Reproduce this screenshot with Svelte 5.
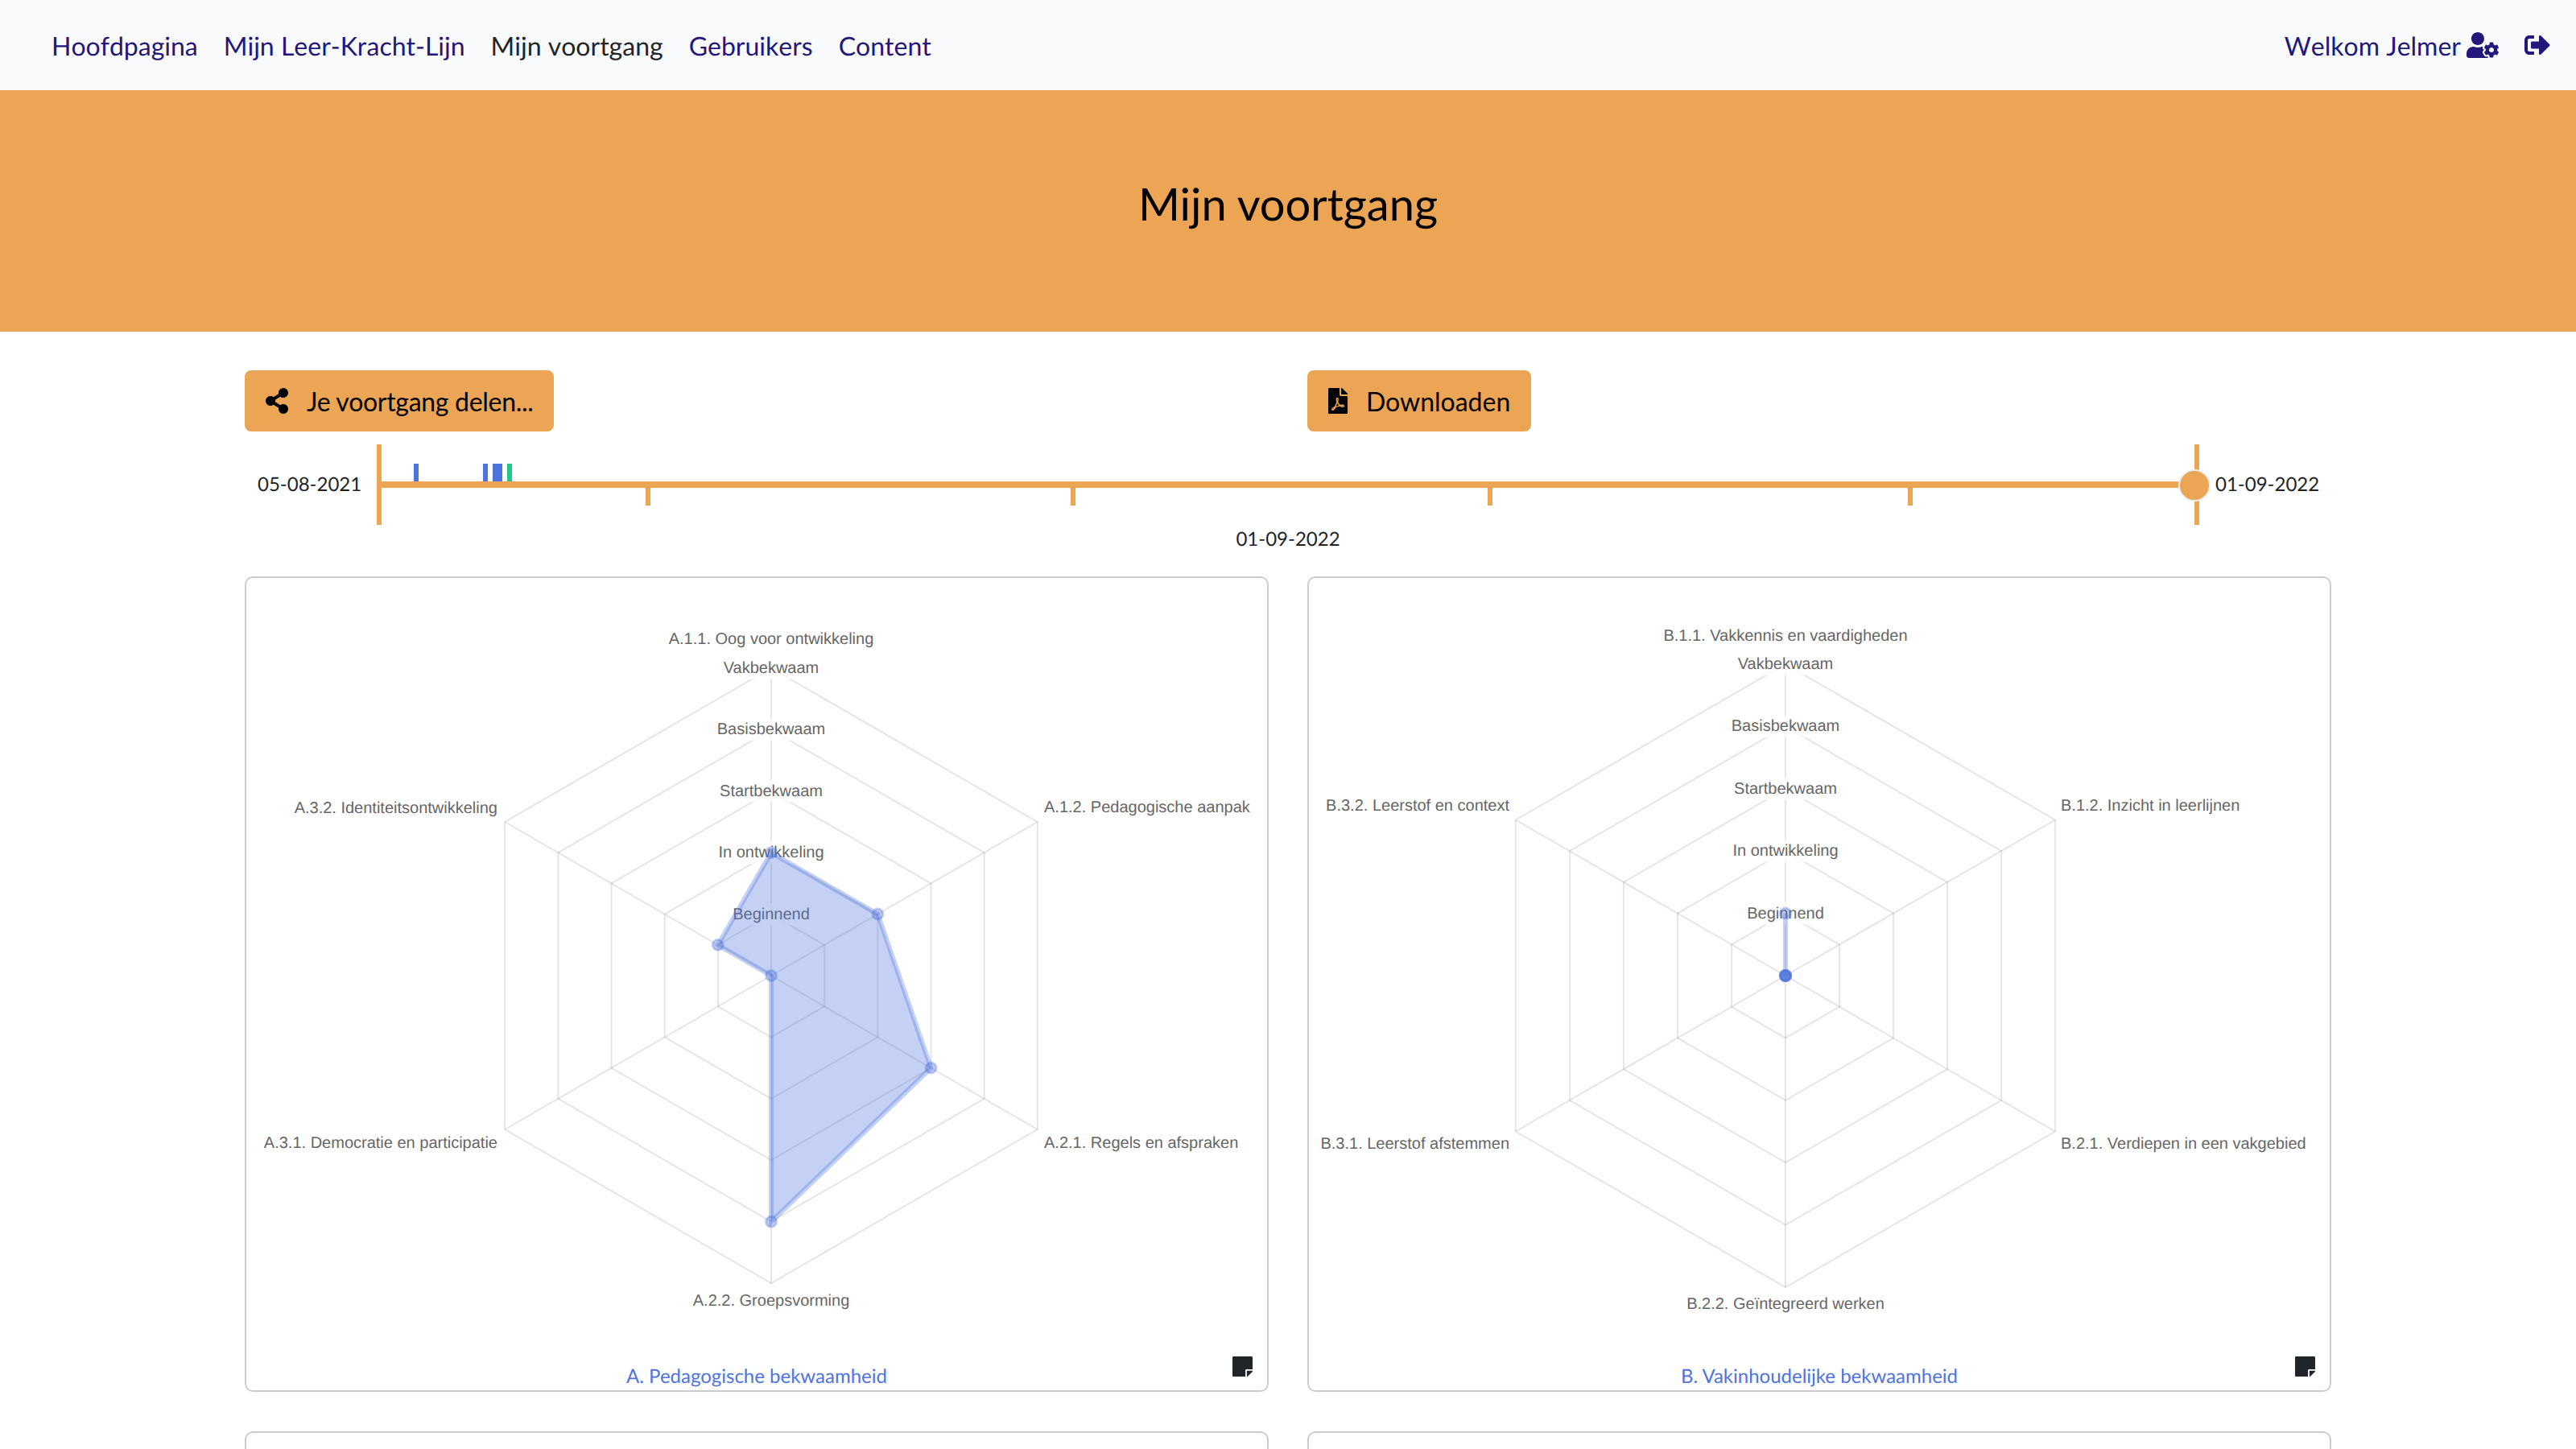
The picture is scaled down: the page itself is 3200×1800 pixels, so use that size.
<script>
  const navItems = [
    { label: 'Hoofdpagina' },
    { label: 'Mijn Leer-Kracht-Lijn' },
    { label: 'Mijn voortgang', active: true },
    { label: 'Gebruikers' },
    { label: 'Content' }
  ];

  const levels = ['Beginnend', 'In ontwikkeling', 'Startbekwaam', 'Basisbekwaam', 'Vakbekwaam'];

  // offsets in px from the left of the track
  const marks = [
    { left: 46, width: 6, color: '#4e73df' },
    { left: 132, width: 6, color: '#4e73df' },
    { left: 144, width: 12, color: '#4e73df' },
    { left: 162, width: 6, color: '#1cc88a' }
  ];
  const ticks = [334, 862, 1380, 1902];

  const charts = [
    {
      title: 'A. Pedagogische bekwaamheid',
      cx: 652, cy: 494, radius: 382,
      values: [2, 2, 3, 4, 0, 1],
      labels: [
        { text: 'A.1.1. Oog voor ontwikkeling', x: 652, y: 76, anchor: 'middle' },
        { text: 'A.1.2. Pedagogische aanpak', x: 991, y: 285, anchor: 'start' },
        { text: 'A.2.1. Regels en afspraken', x: 991, y: 702, anchor: 'start' },
        { text: 'A.2.2. Groepsvorming', x: 652, y: 898, anchor: 'middle' },
        { text: 'A.3.1. Democratie en participatie', x: 312, y: 702, anchor: 'end' },
        { text: 'A.3.2. Identiteitsontwikkeling', x: 312, y: 286, anchor: 'end' }
      ]
    },
    {
      title: 'B. Vakinhoudelijke bekwaamheid',
      cx: 592, cy: 494, radius: 387,
      values: [1, 0, 0, 0, 0, 0],
      labels: [
        { text: 'B.1.1. Vakkennis en vaardigheden', x: 592, y: 72, anchor: 'middle' },
        { text: 'B.1.2. Inzicht in leerlijnen', x: 934, y: 283, anchor: 'start' },
        { text: 'B.2.1. Verdiepen in een vakgebied', x: 934, y: 703, anchor: 'start' },
        { text: 'B.2.2. Geïntegreerd werken', x: 592, y: 902, anchor: 'middle' },
        { text: 'B.3.1. Leerstof afstemmen', x: 249, y: 703, anchor: 'end' },
        { text: 'B.3.2. Leerstof en context', x: 249, y: 283, anchor: 'end' }
      ]
    }
  ];

  function vertex(chart, i, level) {
    const r = (chart.radius / 5) * level;
    const angle = (Math.PI / 3) * i - Math.PI / 2;
    return [chart.cx + r * Math.cos(angle), chart.cy + r * Math.sin(angle)];
  }

  function ring(chart, level) {
    return [0, 1, 2, 3, 4, 5].map((i) => vertex(chart, i, level).join(',')).join(' ');
  }

  function shape(chart) {
    return chart.values.map((v, i) => vertex(chart, i, v).join(',')).join(' ');
  }
</script>

<div class="page">
  <nav class="navbar">
    <ul class="nav-links">
      {#each navItems as item}
        <li class:active={item.active}>{item.label}</li>
      {/each}
    </ul>
    <div class="nav-user">
      <span>Welkom Jelmer</span>
      <svg class="icon-user" viewBox="0 0 640 512"><path d="M610.5 373.3c2.6-14.1 2.6-28.5 0-42.6l25.8-14.9c3-1.7 4.3-5.2 3.3-8.5-6.7-21.6-18.2-41.2-33.2-57.4-2.3-2.5-6-3.1-9-1.4l-25.8 14.9c-10.9-9.3-23.4-16.5-36.9-21.3v-29.8c0-3.4-2.4-6.4-5.7-7.1-22.3-5-45-4.8-66.2 0-3.3.7-5.7 3.7-5.7 7.1v29.8c-13.5 4.8-26 12-36.9 21.3l-25.8-14.9c-2.9-1.7-6.7-1.1-9 1.4-15 16.2-26.5 35.8-33.2 57.4-1 3.3.4 6.8 3.3 8.5l25.8 14.9c-2.6 14.1-2.6 28.5 0 42.6l-25.8 14.9c-3 1.7-4.3 5.2-3.3 8.5 6.7 21.6 18.2 41.1 33.2 57.4 2.3 2.5 6 3.1 9 1.4l25.8-14.9c10.9 9.3 23.4 16.5 36.9 21.3v29.8c0 3.4 2.4 6.4 5.7 7.1 22.3 5 45 4.8 66.2 0 3.3-.7 5.7-3.7 5.7-7.1v-29.8c13.5-4.8 26-12 36.9-21.3l25.8 14.9c2.9 1.7 6.7 1.1 9-1.4 15-16.2 26.5-35.8 33.2-57.4 1-3.3-.4-6.8-3.3-8.5l-25.8-14.9zM496 400.5c-26.8 0-48.5-21.8-48.5-48.5s21.8-48.5 48.5-48.5 48.5 21.8 48.5 48.5-21.7 48.5-48.5 48.5zM224 256c70.7 0 128-57.3 128-128S294.7 0 224 0 96 57.3 96 128s57.3 128 128 128zm201.2 226.5c-2.3-1.2-4.6-2.6-6.8-3.9l-7.9 4.6c-6 3.4-12.8 5.3-19.6 5.3-10.9 0-21.4-4.6-28.9-12.6-18.3-19.8-32.3-43.9-40.2-69.6-5.5-17.7 1.9-36.4 17.9-45.7l7.9-4.6c-.1-2.6-.1-5.2 0-7.8l-7.9-4.6c-16-9.2-23.4-28-17.9-45.7.9-2.9 2.2-5.8 3.2-8.7-3.8-.3-7.5-1.2-11.4-1.2h-16.7c-22.2 10.2-46.9 16-72.9 16s-50.6-5.8-72.9-16h-16.7C60.2 288 0 348.2 0 422.4V464c0 26.5 21.5 48 48 48h352c10.1 0 19.5-3.2 27.2-8.5-1.2-3.8-2-7.7-2-11.8v-9.2z"/></svg>
      <svg class="icon-logout" viewBox="0 0 512 512"><path d="M497 273L329 441c-15 15-41 4.5-41-17v-96H152c-13.3 0-24-10.7-24-24v-96c0-13.3 10.7-24 24-24h136V88c0-21.4 25.9-32 41-17l168 168c9.3 9.4 9.3 24.6 0 34zM192 436v-40c0-6.6-5.4-12-12-12H96c-17.7 0-32-14.3-32-32V160c0-17.7 14.3-32 32-32h84c6.6 0 12-5.4 12-12V76c0-6.6-5.4-12-12-12H96c-53 0-96 43-96 96v192c0 53 43 96 96 96h84c6.6 0 12-5.4 12-12z"/></svg>
    </div>
  </nav>

  <header class="hero">
    <h1>Mijn voortgang</h1>
  </header>

  <main class="container">
    <div class="actions">
      <div>
        <button class="btn share">
          <svg class="icon-share" viewBox="0 0 448 512"><path d="M352 320c-22.608 0-43.387 7.819-59.79 20.895l-102.486-64.054a96.551 96.551 0 0 0 0-41.683l102.486-64.054C308.613 184.181 329.392 192 352 192c53.019 0 96-42.981 96-96S405.019 0 352 0s-96 42.981-96 96c0 7.158.79 14.13 2.276 20.841L155.79 180.895C139.387 167.819 118.608 160 96 160c-53.019 0-96 42.981-96 96s42.981 96 96 96c22.608 0 43.387-7.819 59.79-20.895l102.486 64.054A96.301 96.301 0 0 0 256 416c0 53.019 42.981 96 96 96s96-42.981 96-96-42.981-96-96-96z"/></svg>
          Je voortgang delen...
        </button>
      </div>
      <div>
        <button class="btn">
          <svg class="icon-pdf" viewBox="0 0 384 512"><path d="M181.9 256.1c-5-16-4.9-46.9-2-46.9 8.4 0 7.6 36.9 2 46.9zm-1.7 47.2c-7.7 20.2-17.3 43.3-28.4 62.7 18.3-7 39-17.2 62.9-21.9-12.7-9.6-24.9-23.4-34.5-40.8zM86.1 428.1c0 .8 13.2-5.4 34.9-40.2-6.7 6.3-29.1 24.5-34.9 40.2zM248 160h136v328c0 13.3-10.7 24-24 24H24c-13.3 0-24-10.7-24-24V24C0 10.7 10.7 0 24 0h200v136c0 13.2 10.8 24 24 24zm-8 171.8c-20-12.2-33.3-29-42.7-53.8 4.5-18.5 11.6-46.6 6.2-64.2-4.7-29.4-42.4-26.5-47.8-6.8-5 18.3-.4 44.1 8.1 77-11.6 27.6-28.7 64.6-40.8 85.8-.1 0-.1.1-.2.1-27.1 13.9-73.6 44.5-54.5 68 5.6 6.9 16 10 21.5 10 17.9 0 35.7-18 61.1-61.8 25.8-8.5 54.1-19.1 79-23.2 21.7 11.8 47.1 19.5 64 19.5 29.2 0 31.2-32 19.7-43.4-13.9-13.6-54.3-9.7-73.6-7.2zM377 105L279 7c-4.5-4.5-10.6-7-17-7h-6v128h128v-6.1c0-6.3-2.5-12.4-7-16.9zm-74.1 255.3c4.1-2.7-2.5-11.9-42.8-9 37.1 15.8 42.8 9 42.8 9z"/></svg>
          Downloaden
        </button>
      </div>
    </div>

    <div class="timeline">
      <span class="date start">05-08-2021</span>
      <div class="track">
        <div class="edge left"></div>
        <div class="edge right"></div>
        <div class="rail"></div>
        {#each marks as m}
          <div class="mark" style="left: {m.left}px; width: {m.width}px; background: {m.color}"></div>
        {/each}
        {#each ticks as t}
          <div class="tick" style="left: {t}px"></div>
        {/each}
        <div class="handle"></div>
      </div>
      <span class="date end">01-09-2022</span>
    </div>
    <div class="current-date">01-09-2022</div>

    <div class="charts">
      {#each charts as chart}
        <section class="card">
          <svg class="radar" viewBox="0 0 1268 1008">
            {#each [1, 2, 3, 4, 5] as level}
              <polygon class="grid-line" points={ring(chart, level)} />
            {/each}
            {#each [0, 1, 2, 3, 4, 5] as i}
              {@const p = vertex(chart, i, 5)}
              <line class="grid-line" x1={chart.cx} y1={chart.cy} x2={p[0]} y2={p[1]} />
            {/each}
            {#each levels as name, i}
              {@const y = chart.cy - (chart.radius / 5) * (i + 1)}
              <rect class="tick-bg" x={chart.cx - name.length * 6.2} y={y - 14} width={name.length * 12.4} height="28" />
              <text class="tick-label" x={chart.cx} {y}>{name}</text>
            {/each}
            {#each chart.labels as l}
              <text class="axis-label" x={l.x} y={l.y} text-anchor={l.anchor}>{l.text}</text>
            {/each}
            <polygon class="area" points={shape(chart)} />
            {#each chart.values as v, i}
              {@const p = vertex(chart, i, v)}
              <circle class="point" cx={p[0]} cy={p[1]} r="6.5" />
            {/each}
          </svg>
          <div class="card-title">{chart.title}</div>
          <svg class="icon-note" viewBox="0 32 448 448"><path d="M312 320h136V56c0-13.3-10.7-24-24-24H24C10.7 32 0 42.7 0 56v400c0 13.3 10.7 24 24 24h264V344c0-13.2 10.8-24 24-24zm129 55l-98 98c-4.5 4.5-10.6 7-17 7h-6V352h128v6.1c0 6.3-2.5 12.4-7 16.9z"/></svg>
        </section>
      {/each}
      <section class="card"></section>
      <section class="card"></section>
    </div>
  </main>
</div>

<style>
  :global(body) {
    margin: 0;
    background: #fff;
  }

  .page {
    height: 100vh;
    overflow: hidden;
    font-family: Lato, "Liberation Sans", sans-serif;
    color: #212529;
    text-rendering: geometricPrecision;
  }

  .navbar {
    height: 112px;
    box-sizing: border-box;
    padding: 0 32px 0 64px;
    display: flex;
    align-items: center;
    justify-content: space-between;
    background: #f8fafc;
    color: #24177a;
    font-size: 32px;
    font-kerning: none;
  }

  .nav-links {
    display: flex;
    gap: 32px;
    margin: 0;
    padding: 0;
    list-style: none;
  }

  .nav-links .active {
    color: #212529;
  }

  .nav-user {
    display: flex;
    align-items: center;
  }

  .nav-user svg {
    fill: #24177a;
    height: 32px;
  }

  .icon-user {
    width: 40px;
    margin-left: 7px;
  }

  .icon-logout {
    width: 32px;
    margin-left: 32px;
  }

  .hero {
    height: 300px;
    box-sizing: border-box;
    padding-bottom: 20px;
    display: flex;
    align-items: center;
    justify-content: center;
    background: #eca555;
  }

  .hero h1 {
    margin: 0;
    font-size: 56px;
    font-weight: 400;
    color: #000;
  }

  .container {
    width: 2592px;
    margin: 0 auto;
    padding-top: 48px;
  }

  .actions {
    display: grid;
    grid-template-columns: 1fr 1fr;
    gap: 48px;
  }

  .btn {
    height: 76px;
    padding: 0 26px;
    display: inline-flex;
    align-items: center;
    border: 0;
    border-radius: 8px;
    background: #eca555;
    color: #000;
    font: inherit;
    font-size: 32px;
  }

  .btn.share {
    letter-spacing: -0.3px;
  }

  .btn svg {
    height: 32px;
    fill: #000;
  }

  .icon-share {
    width: 28px;
    margin-right: 23px;
  }

  .icon-pdf {
    width: 24px;
    margin-right: 23px;
  }

  .timeline {
    margin-top: 16px;
    height: 100px;
    display: flex;
    align-items: center;
    font-size: 24px;
  }

  .date {
    margin-bottom: 2px;
  }

  .date.start {
    width: 164px;
    box-sizing: border-box;
    padding-left: 16px;
  }

  .date.end {
    margin-left: 20px;
  }

  .track {
    position: relative;
    width: 2264px;
    height: 100%;
  }

  .edge {
    position: absolute;
    top: 0;
    bottom: 0;
    width: 6px;
    background: #eca555;
  }

  .edge.left {
    left: 0;
  }

  .edge.right {
    right: 0;
  }

  .rail {
    position: absolute;
    left: 6px;
    right: 0;
    top: 46px;
    height: 8px;
    background: #eca555;
  }

  .mark {
    position: absolute;
    top: 24px;
    height: 22px;
  }

  .tick {
    position: absolute;
    top: 54px;
    width: 6px;
    height: 22px;
    background: #eca555;
  }

  .handle {
    position: absolute;
    left: 2238px;
    top: 31px;
    width: 36px;
    height: 36px;
    border: 2px solid #eee;
    border-radius: 50%;
    background: #eca555;
  }

  .current-date {
    margin-top: 3px;
    height: 61px;
    text-align: center;
    font-size: 24px;
    line-height: 30px;
  }

  .charts {
    display: grid;
    grid-template-columns: 1fr 1fr;
    gap: 49px 48px;
  }

  .card {
    position: relative;
    height: 1013px;
    box-sizing: border-box;
    border: 2px solid #ccc;
    border-radius: 10px;
  }

  .radar {
    display: block;
    width: 100%;
    height: 1008px;
  }

  .grid-line {
    fill: none;
    stroke: rgba(0, 0, 0, 0.1);
    stroke-width: 2;
  }

  .tick-bg {
    fill: rgba(255, 255, 255, 0.75);
  }

  .tick-label,
  .axis-label {
    font-family: "Liberation Sans", Arial, sans-serif;
    font-size: 20px;
    fill: #666;
    dominant-baseline: central;
  }

  .tick-label {
    text-anchor: middle;
  }

  .area {
    fill: rgba(78, 115, 223, 0.33);
    stroke: rgba(78, 115, 223, 0.33);
    stroke-width: 6;
  }

  .point {
    fill: rgba(78, 115, 223, 0.33);
    stroke: rgba(78, 115, 223, 0.33);
    stroke-width: 3;
  }

  .card-title {
    position: absolute;
    left: 0;
    right: 0;
    top: 977px;
    text-align: center;
    font-size: 24px;
    line-height: 30px;
    color: #4e73df;
  }

  .icon-note {
    position: absolute;
    right: 18px;
    top: 967px;
    width: 25px;
    height: 25px;
    fill: #212529;
  }
</style>
